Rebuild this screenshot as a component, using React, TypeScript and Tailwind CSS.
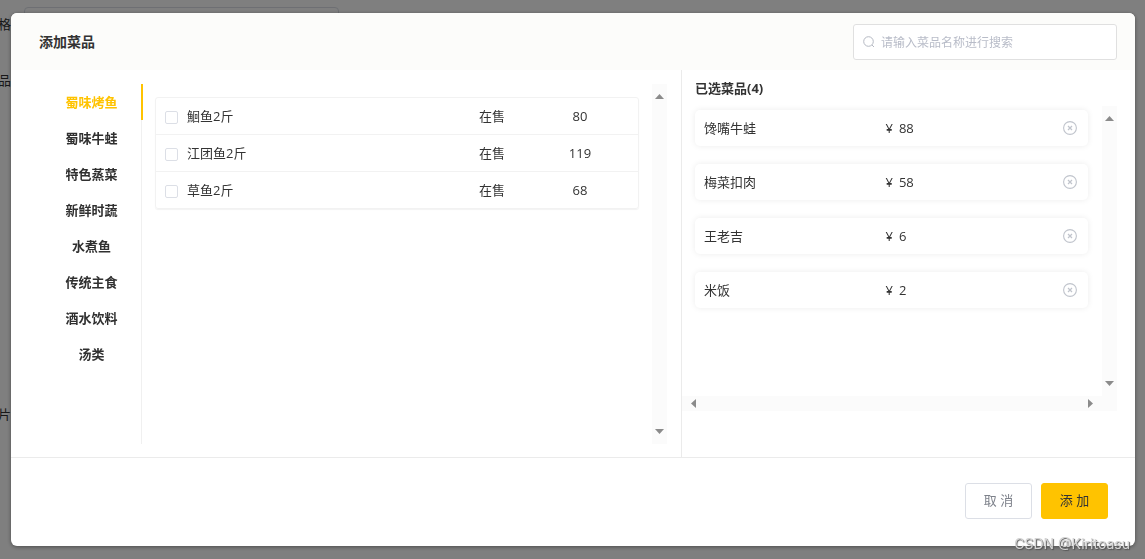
import React, { useState } from "react";

type Dish = {
  id: number;
  name: string;
  status: string;
  price: number;
};

type SelectedDish = {
  id: number;
  name: string;
  price: number;
};

const categories = ["蜀味烤鱼", "蜀味牛蛙", "特色蒸菜", "新鲜时蔬", "水煮鱼", "传统主食", "酒水饮料", "汤类"];

const dishes: Dish[] = [
  { id: 1, name: "鮰鱼2斤", status: "在售", price: 80 },
  { id: 2, name: "江团鱼2斤", status: "在售", price: 119 },
  { id: 3, name: "草鱼2斤", status: "在售", price: 68 }
];

const initialSelected: SelectedDish[] = [
  { id: 11, name: "馋嘴牛蛙", price: 88 },
  { id: 12, name: "梅菜扣肉", price: 58 },
  { id: 13, name: "王老吉", price: 6 },
  { id: 14, name: "米饭", price: 2 }
];

function SearchIcon() {
  return (
    <svg viewBox="0 0 12 12" className="h-3 w-3 shrink-0" fill="none" stroke="#b4b8c2" aria-hidden="true">
      <circle cx="5.5" cy="5.5" r="4.8" />
      <path d="M9 9l2 2" />
    </svg>
  );
}

function CircleCloseIcon() {
  return (
    <svg viewBox="0 0 14 14" className="h-3.5 w-3.5" fill="none" stroke="#c0c4cc" aria-hidden="true">
      <circle cx="7" cy="7" r="6.4" strokeWidth="1.1" />
      <path d="M5 5l4 4M9 5l-4 4" strokeWidth="1.2" />
    </svg>
  );
}

function VerticalScrollbar() {
  return (
    <div className="flex w-[15px] shrink-0 flex-col items-center justify-between bg-[#fbfbfb] py-2.5" aria-hidden="true">
      <svg viewBox="0 0 9 5" className="h-[5px] w-[9px]" fill="#8b8b8b">
        <path d="M4.5 0L9 5H0z" />
      </svg>
      <svg viewBox="0 0 9 5" className="h-[5px] w-[9px]" fill="#8b8b8b">
        <path d="M0 0h9L4.5 5z" />
      </svg>
    </div>
  );
}

function HorizontalScrollbar() {
  return (
    <div className="flex h-[15px] shrink-0 items-center justify-between bg-[#fbfbfb] pl-[9px] pr-6" aria-hidden="true">
      <svg viewBox="0 0 5 9" className="h-[9px] w-[5px]" fill="#8b8b8b">
        <path d="M5 0v9L0 4.5z" />
      </svg>
      <svg viewBox="0 0 5 9" className="h-[9px] w-[5px]" fill="#8b8b8b">
        <path d="M0 0l5 4.5L0 9z" />
      </svg>
    </div>
  );
}

// Form page that sits under the dialog mask
function PageBehind() {
  return (
    <div className="fixed inset-0 overflow-hidden bg-white text-[13px] leading-5 text-[#303133]">
      <div className="ml-6 mt-[7px] h-9 w-[315px] rounded border border-[#dcdfe6]" />
      <div className="absolute -left-0.5 top-3.5">格</div>
      <div className="absolute -left-0.5 top-[70px]">品</div>
      <div className="absolute -left-0.5 top-[404px]">片</div>
    </div>
  );
}

export default function App() {
  const [active, setActive] = useState(categories[0]);
  const [keyword, setKeyword] = useState("");
  const [checked, setChecked] = useState<number[]>([]);
  const [selected, setSelected] = useState(initialSelected);

  const toggle = (id: number) => {
    setChecked((prev) => (prev.includes(id) ? prev.filter((c) => c !== id) : [...prev, id]));
  };

  const rows = dishes.filter((dish) => dish.name.includes(keyword));

  return (
    <div className="font-['Open_Sans','Noto_Sans_CJK_SC',sans-serif] text-[13px] text-[#333]">
      <PageBehind />

      <div className="relative min-h-screen bg-black/50 pb-[13px] pl-[11px] pr-2.5 pt-[13px]">
        <div
          role="dialog"
          aria-labelledby="dialog-title"
          className="overflow-hidden rounded-md bg-white shadow-[0_1px_4px_rgba(0,0,0,0.4)]"
        >
          <header className="flex items-center justify-between bg-[#fcfcfa] pb-2.5 pl-7 pr-[18px] pt-[11px]">
            <h1 id="dialog-title" className="text-sm font-bold">
              添加菜品
            </h1>
            <label className="flex h-9 w-[264px] items-center gap-1.5 rounded-[3px] border border-[#e0e0e0] bg-white px-[9px]">
              <SearchIcon />
              <input
                type="text"
                aria-label="搜索菜品"
                value={keyword}
                onChange={(e) => setKeyword(e.target.value)}
                placeholder="请输入菜品名称进行搜索"
                className="min-w-0 flex-1 pt-0.5 text-xs outline-none placeholder:text-[#b8bcc8]"
              />
            </label>
          </header>

          <div className="grid grid-cols-[131px_539fr_454fr]">
            <nav className="mb-[13px] ml-[31px] mt-3.5 min-h-[360px] border-r border-[#f0f0f0]">
              {categories.map((name) => (
                <button
                  key={name}
                  type="button"
                  onClick={() => setActive(name)}
                  className={`relative block h-9 w-full pt-0.5 text-center font-bold ${
                    active === name ? "text-[#ffc300]" : "text-[#303030]"
                  }`}
                >
                  {name}
                  {active === name && <span className="absolute -right-0.5 top-0 h-9 w-0.5 bg-[#ffc300]" />}
                </button>
              ))}
            </nav>

            <section className="mb-[13px] mt-3.5 flex gap-[13px] pl-[13px] pr-3.5">
              <div className="min-w-0 flex-1 pt-[13px]">
                <div className="rounded-[3px] border border-[#f2f2f2] shadow-[0_1px_1px_rgba(0,0,0,0.05)]">
                  <table className="w-full border-separate border-spacing-0">
                    <tbody>
                      {rows.map((dish) => (
                        <tr
                          key={dish.id}
                          className="h-[37px] last:h-9 [&>td]:border-b [&>td]:border-[#f2f2f2] [&>td]:pt-0.5 last:[&>td]:border-b-0"
                        >
                          <td className="pl-[9px]">
                            <label className="flex items-center gap-[9px]">
                              <input
                                type="checkbox"
                                checked={checked.includes(dish.id)}
                                onChange={() => toggle(dish.id)}
                                className="h-[13px] w-[13px] appearance-none rounded-[2px] border border-[#dcdfe6] bg-white checked:border-[#ffc300] checked:bg-[#ffc300]"
                              />
                              {dish.name}
                            </label>
                          </td>
                          <td className="w-[88px] text-center">{dish.status}</td>
                          <td className="w-[88px] text-center">{dish.price}</td>
                          <td className="w-3.5" />
                        </tr>
                      ))}
                    </tbody>
                  </table>
                </div>
              </div>
              <VerticalScrollbar />
            </section>

            <section className="flex flex-col border-l border-[#ebebeb] pb-[46px] pr-[18px]">
              <h2 className="h-9 pl-[13px] text-[13px] font-bold leading-9">已选菜品({selected.length})</h2>
              <div className="flex flex-1">
                <ul className="flex flex-1 flex-col gap-[18px] pl-[13px] pr-3.5 pt-1">
                  {selected.map((dish) => (
                    <li
                      key={dish.id}
                      className="grid h-9 grid-cols-[1fr_1fr_14px] items-center rounded-[5px] bg-white pl-[9px] pr-[11px] shadow-[0_0_6px_rgba(0,0,0,0.08)]"
                    >
                      <span className="pt-0.5">{dish.name}</span>
                      <span className="flex gap-1.5 pl-0.5 pt-0.5">
                        <span>¥</span>
                        <span>{dish.price}</span>
                      </span>
                      <button
                        type="button"
                        aria-label={`移除${dish.name}`}
                        onClick={() => setSelected((prev) => prev.filter((d) => d.id !== dish.id))}
                      >
                        <CircleCloseIcon />
                      </button>
                    </li>
                  ))}
                </ul>
                <VerticalScrollbar />
              </div>
              <HorizontalScrollbar />
            </section>
          </div>

          <footer className="flex justify-end gap-[9px] border-t border-[#ebebeb] pb-[27px] pr-[27px] pt-[25px]">
            <button type="button" className="h-9 w-[67px] rounded-[3px] border border-[#dcdfe6] bg-white text-[#7d818a]">
              取 消
            </button>
            <button type="button" className="h-9 w-[67px] rounded-[3px] border border-[#ffc300] bg-[#ffc300]">
              添 加
            </button>
          </footer>
        </div>
      </div>

      <div className="fixed bottom-[5px] right-[15px] font-['Inter',sans-serif] text-sm leading-5 text-[#d4d4d4] [text-shadow:1px_1px_1px_#555]">
        CSDN @Kiritoasu
      </div>
    </div>
  );
}
